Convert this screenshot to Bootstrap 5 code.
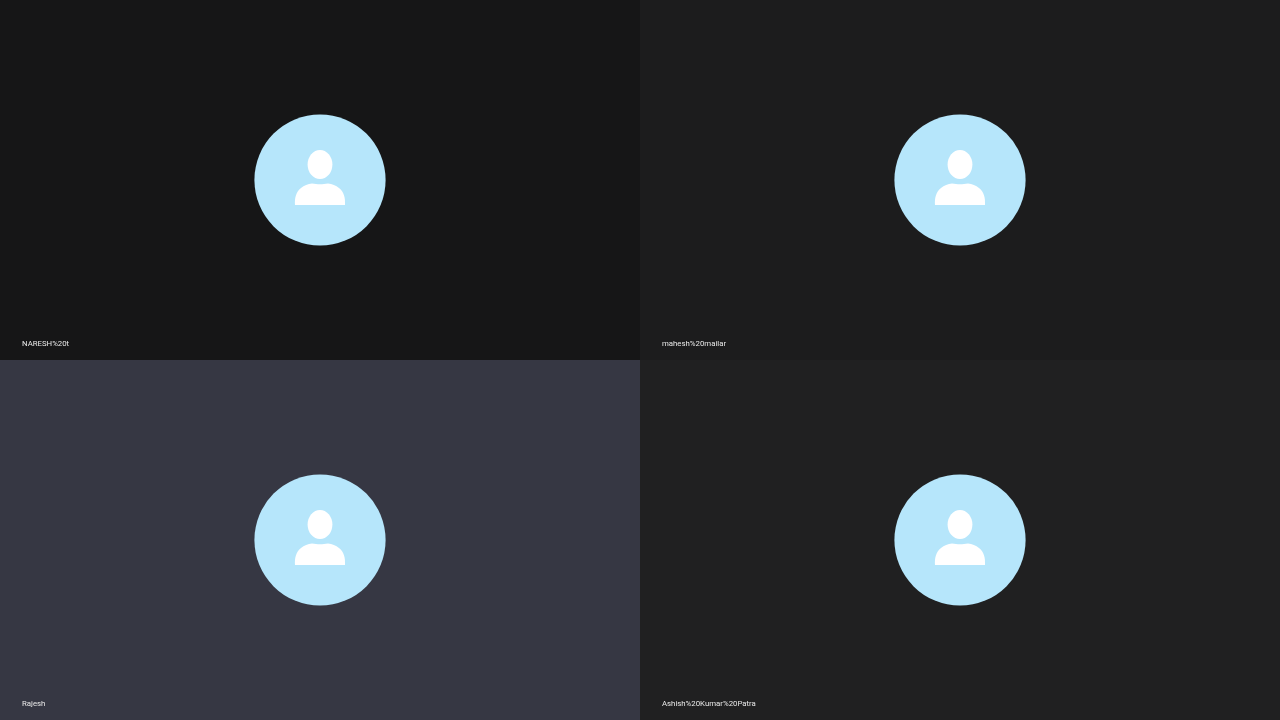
<!DOCTYPE html>
<html lang="en">
<head>
<meta charset="utf-8">
<title>Meeting</title>
<link rel="stylesheet" href="https://cdn.jsdelivr.net/npm/bootstrap@5.3.0/dist/css/bootstrap.min.css">
<style>
html, body { height: 100%; background: #161617; }
.stage { display: grid; grid-template-columns: 640px 640px; grid-template-rows: 360px 360px; width: 1280px; height: 720px; }
.tile-a { background: #161617; }
.tile-b { background: #1c1c1d; }
.tile-c { background: #363743; }
.tile-d { background: #202021; }
.face { width: 132px; height: 132px; display: block; }
.who { left: 21.5px; bottom: 10px; color: #e8e8e8; font-family: Roboto, "Liberation Sans", sans-serif; font-size: 7.8px; line-height: 12px; white-space: nowrap; transform: translateZ(0); will-change: transform; }
</style>
</head>
<body class="overflow-hidden">
<main class="stage">
  <section class="tile-a position-relative d-flex align-items-center justify-content-center">
    <svg class="face" viewBox="0 0 132 132"><circle cx="66" cy="66" r="65.6" fill="#b6e6fb"/><ellipse cx="66" cy="50.500" rx="12.400" ry="14.600" fill="#fff"/><path d="M41 91C40.500 84 42 78 47 74C50 71.500 54 70 58 69.500C61 69.800 63 70.300 66 70.300C69 70.300 71 69.800 74 69.500C78 70 82 71.500 85 74C90 78 91.500 84 91 91Z" fill="#fff"/></svg>
    <span class="who position-absolute">NARESH%20t</span>
  </section>
  <section class="tile-b position-relative d-flex align-items-center justify-content-center">
    <svg class="face" viewBox="0 0 132 132"><circle cx="66" cy="66" r="65.6" fill="#b6e6fb"/><ellipse cx="66" cy="50.500" rx="12.400" ry="14.600" fill="#fff"/><path d="M41 91C40.500 84 42 78 47 74C50 71.500 54 70 58 69.500C61 69.800 63 70.300 66 70.300C69 70.300 71 69.800 74 69.500C78 70 82 71.500 85 74C90 78 91.500 84 91 91Z" fill="#fff"/></svg>
    <span class="who position-absolute">mahesh%20mailar</span>
  </section>
  <section class="tile-c position-relative d-flex align-items-center justify-content-center">
    <svg class="face" viewBox="0 0 132 132"><circle cx="66" cy="66" r="65.6" fill="#b6e6fb"/><ellipse cx="66" cy="50.500" rx="12.400" ry="14.600" fill="#fff"/><path d="M41 91C40.500 84 42 78 47 74C50 71.500 54 70 58 69.500C61 69.800 63 70.300 66 70.300C69 70.300 71 69.800 74 69.500C78 70 82 71.500 85 74C90 78 91.500 84 91 91Z" fill="#fff"/></svg>
    <span class="who position-absolute">Rajesh</span>
  </section>
  <section class="tile-d position-relative d-flex align-items-center justify-content-center">
    <svg class="face" viewBox="0 0 132 132"><circle cx="66" cy="66" r="65.6" fill="#b6e6fb"/><ellipse cx="66" cy="50.500" rx="12.400" ry="14.600" fill="#fff"/><path d="M41 91C40.500 84 42 78 47 74C50 71.500 54 70 58 69.500C61 69.800 63 70.300 66 70.300C69 70.300 71 69.800 74 69.500C78 70 82 71.500 85 74C90 78 91.500 84 91 91Z" fill="#fff"/></svg>
    <span class="who position-absolute">Ashish%20Kumar%20Patra</span>
  </section>
</main>
<script src="https://cdn.jsdelivr.net/npm/bootstrap@5.3.0/dist/js/bootstrap.bundle.min.js"></script>
</body>
</html>
